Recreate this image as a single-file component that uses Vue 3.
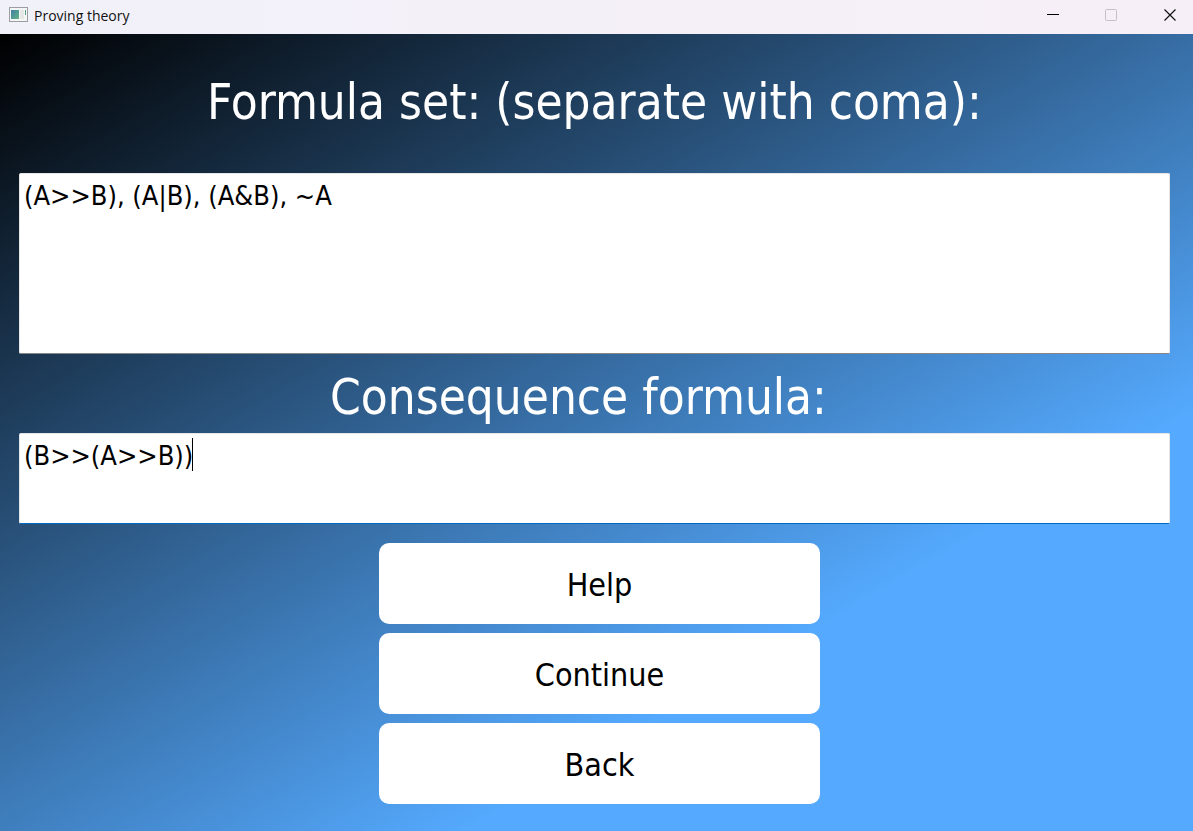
<script setup>
import { ref } from 'vue'

const formulas = ref('(A>>B), (A|B), (A&B), ~A')
const consequence = ref('(B>>(A>>B))')
const actions = ['Help', 'Continue', 'Back']
</script>

<template>
  <div class="window">
    <header class="titlebar">
      <svg class="app-icon" width="20" height="16" viewBox="0 0 20 16" aria-hidden="true">
        <defs>
          <linearGradient id="pane" x1="0" y1="0" x2="1" y2="1">
            <stop offset="0" stop-color="#3f7fa6" />
            <stop offset="1" stop-color="#63b486" />
          </linearGradient>
        </defs>
        <rect x="0.5" y="0.5" width="18" height="14" fill="#f4f5f5" stroke="#9a9da1" />
        <rect x="2" y="3" width="8" height="9" fill="url(#pane)" />
        <rect x="11" y="3" width="4" height="9" fill="#e6e8e8" />
        <rect x="16" y="3" width="1" height="5" fill="#58a08c" />
      </svg>
      <span class="title">Proving theory</span>
      <div class="controls">
        <button type="button" aria-label="Minimize">
          <svg width="12" height="12" viewBox="0 0 12 12"><path d="M0 5.5H12" stroke="#000" /></svg>
        </button>
        <button type="button" aria-label="Maximize" disabled>
          <svg width="12" height="12" viewBox="0 0 12 12">
            <rect x="0.5" y="0.5" width="11" height="11" rx="1" fill="none" stroke="#c5c0c7" />
          </svg>
        </button>
        <button type="button" aria-label="Close">
          <svg width="12" height="12" viewBox="0 0 12 12">
            <path d="M0.5 0.5L11.5 11.5M11.5 0.5L0.5 11.5" stroke="#111" stroke-width="1.2" />
          </svg>
        </button>
      </div>
    </header>

    <main class="content">
      <label class="heading first" for="formulas">Formula set: (separate with coma):</label>
      <textarea id="formulas" v-model="formulas" class="field tall" spellcheck="false"></textarea>
      <label class="heading second" for="consequence">Consequence formula:</label>
      <div class="active">
        <textarea id="consequence" v-model="consequence" class="field" spellcheck="false"></textarea>
        <span class="caret"></span>
      </div>
      <div class="actions">
        <button v-for="a in actions" :key="a" type="button" class="action">{{ a }}</button>
      </div>
    </main>
  </div>
</template>

<style>
body {
  margin: 0;
}
</style>

<style scoped>
.window {
  display: flex;
  flex-direction: column;
  min-height: 100vh;
  font-family: "DejaVu Sans Condensed", "Noto Sans", sans-serif;
}

.titlebar {
  display: flex;
  align-items: center;
  box-sizing: border-box;
  height: 34px;
  padding: 0 0 4px 9px;
  background: linear-gradient(90deg, #f1f1f9, #f7eff7);
}

.title {
  flex: 1;
  margin-left: 5px;
  padding-top: 2px;
  font-family: "Open Sans", "Noto Sans", sans-serif;
  font-size: 14px;
  line-height: 20px;
  color: #111;
}

.app-icon {
  display: block;
}

.controls {
  display: flex;
}

.controls button {
  display: flex;
  align-items: center;
  justify-content: center;
  width: 58px;
  height: 30px;
  padding: 0;
  border: 0;
  background: none;
}

.controls button:last-child {
  width: 53px;
  padding-left: 7px;
}

.content {
  flex: 1;
  display: flex;
  flex-direction: column;
  padding: 28px 23px 27px 19px;
  background: linear-gradient(150deg, #000 0%, #55aaff 72%);
}

.heading {
  display: block;
  font-size: 49px;
  line-height: 70px;
  text-align: center;
  color: #fff;
}

.first {
  padding: 6px 0 35px;
}

.second {
  padding: 9px 32px 0 0;
}

.field {
  display: block;
  box-sizing: border-box;
  width: 100%;
  height: 91px;
  margin: 0;
  padding: 5px 4px;
  border: 1px solid #e6e6e6;
  border-bottom-color: #868686;
  border-radius: 2px;
  outline: 0;
  resize: none;
  background: #fff;
  color: #000;
  font-family: inherit;
  font-size: 27px;
  line-height: 34px;
}

.tall {
  height: 181px;
}

.active {
  position: relative;
}

.active .field {
  border-bottom-color: #0067c0;
}

.caret {
  position: absolute;
  top: 5px;
  left: 173px;
  width: 1px;
  height: 33px;
  background: #000;
}

.actions {
  display: flex;
  flex-direction: column;
  gap: 9px;
  width: 441px;
  margin: 19px auto 0;
  padding-left: 10px;
}

.action {
  height: 81px;
  padding: 2px 0 0;
  border: 0;
  border-radius: 10px;
  background: #fff;
  color: #000;
  font-family: inherit;
  font-size: 32px;
  line-height: 40px;
}
</style>
